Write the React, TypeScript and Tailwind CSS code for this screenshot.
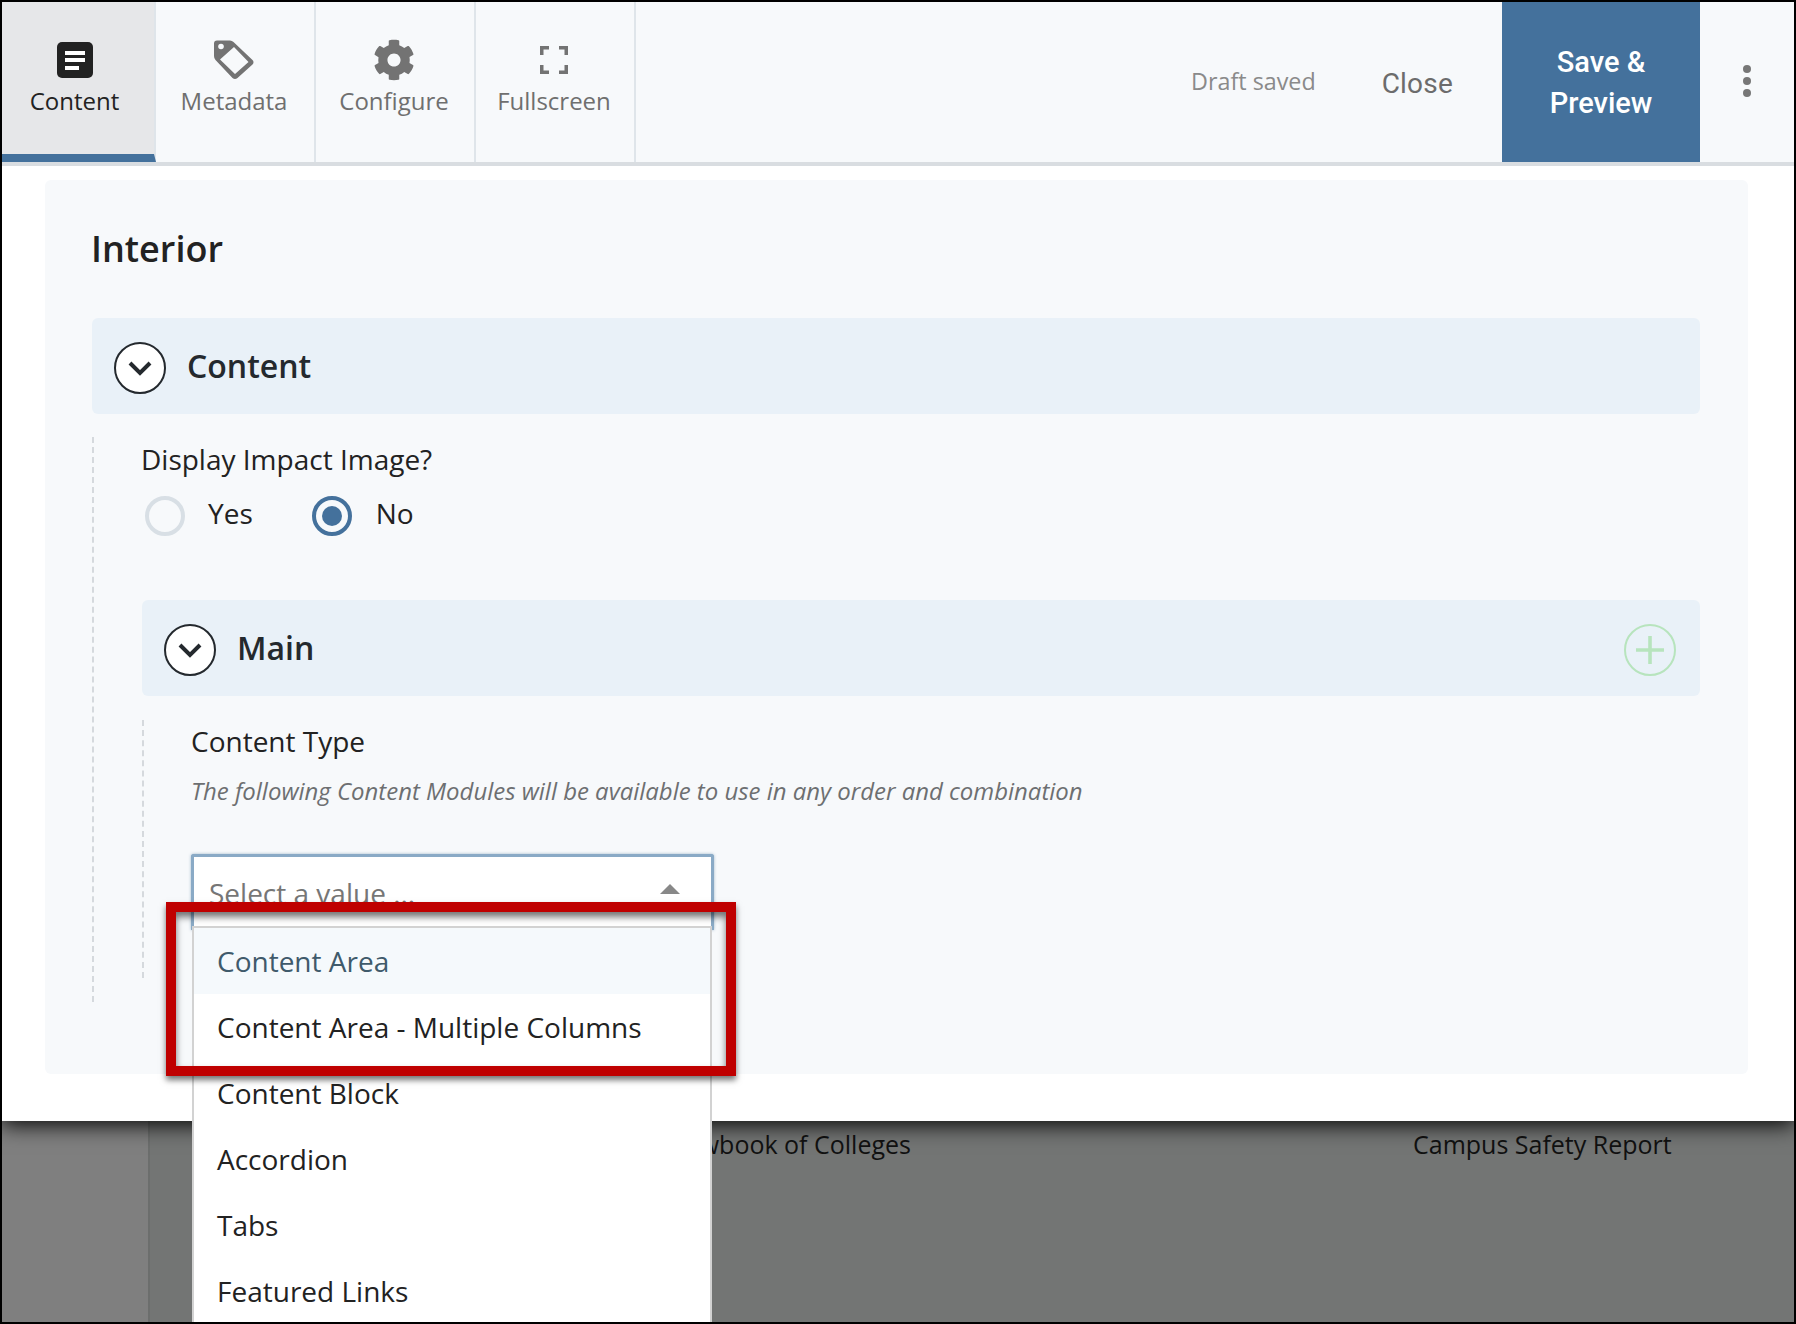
import React from "react";
import { FaCog } from "react-icons/fa";

const sans = "font-['Open_Sans',sans-serif]";

function DocIcon() {
  return (
    <svg width="36" height="36" viewBox="0 0 36 36">
      <rect width="36" height="36" rx="5" fill="#222222" />
      <rect x="8" y="9" width="20" height="4" fill="#fff" />
      <rect x="8" y="16" width="20" height="4" fill="#fff" />
      <rect x="8" y="24" width="14" height="4" fill="#fff" />
    </svg>
  );
}

function TagIcon() {
  return (
    <svg width="40" height="40" viewBox="0 0 40 40">
      <path
        d="M3 0.5 H16 Q18 0.5 19.5 2 L38.5 20 Q40.5 22 38.5 24.5 L23.5 38 Q21 40 18.5 38 L1.5 20 Q0 18.5 0 16 V3.5 Q0 0.5 3 0.5 Z M20 7 L6 19.5 L21 34 L34.5 22 Z"
        fill="#737373"
        fillRule="evenodd"
      />
      <circle cx="7" cy="6.5" r="2.8" fill="#f7f9fb" />
    </svg>
  );
}

function FullIcon() {
  return (
    <svg width="28" height="28" viewBox="0 0 28 28" fill="#737373">
      <path d="M0 0 H9 V3.5 H3.5 V9 H0 Z" />
      <path d="M28 0 H19 V3.5 H24.5 V9 H28 Z" />
      <path d="M0 28 H9 V24.5 H3.5 V19 H0 Z" />
      <path d="M28 28 H19 V24.5 H24.5 V19 H28 Z" />
    </svg>
  );
}

function Tab({ label, active, icon }: { label: string; active?: boolean; icon: React.ReactNode }) {
  return (
    <div
      className={
        active
          ? "w-[154px] h-[160px] shrink-0 flex flex-col items-center pr-[7px] bg-[#e6e7e9] border-b-[8px] border-[#44719c] border-r-[2px] border-r-[#dfe5ea] text-[#222222]"
          : "w-[160px] h-[160px] shrink-0 flex flex-col items-center pr-[2px] border-r-[2px] border-[#dfe5ea] text-[#6f6f6f]"
      }
    >
      <div className="h-[40px] mt-[38px] flex items-center justify-center">{icon}</div>
      <div className="mt-[4px] text-[24px] leading-[34px]">{label}</div>
    </div>
  );
}

function Chevron() {
  return (
    <div className="w-[52px] h-[52px] mt-[4px] rounded-full bg-white border-[2px] border-[#24292e] flex items-center justify-center shrink-0">
      <svg width="24" height="15" viewBox="0 0 24 15" fill="none">
        <path d="M2 2 L12 12 L22 2" stroke="#24292e" strokeWidth="4" />
      </svg>
    </div>
  );
}

function Radio({ checked }: { checked?: boolean }) {
  return (
    <div
      className={
        checked
          ? "w-[40px] h-[40px] rounded-full border-[4px] border-[#44719c] flex items-center justify-center"
          : "w-[40px] h-[40px] rounded-full border-[4px] border-[#d8dfe5]"
      }
    >
      {checked ? <div className="w-[20px] h-[20px] rounded-full bg-[#44719c]" /> : null}
    </div>
  );
}

const options = ["Content Area", "Content Area - Multiple Columns", "Content Block", "Accordion", "Tabs", "Featured Links"];

export default function App() {
  return (
    <div className={`relative w-[1796px] h-[1324px] overflow-hidden border-[2px] border-black flex flex-col bg-[#737574] ${sans}`}>
      {/* Modal */}
      <div className="relative z-10 h-[1119px] shrink-0 bg-white flex flex-col shadow-[0_4px_20px_rgba(0,0,0,0.95)]">
        <div className="h-[164px] shrink-0 bg-[#f7f9fb] border-b-[4px] border-[#d9dde1] flex">
          <Tab label="Content" active icon={<DocIcon />} />
          <Tab label="Metadata" icon={<TagIcon />} />
          <Tab label="Configure" icon={<FaCog className="w-[42px] h-[42px] text-[#737373]" />} />
          <Tab label="Fullscreen" icon={<FullIcon />} />
          <div className="flex-1 flex items-center justify-end text-[#8a8a8a]">
            <div className="text-[23.3px] leading-none">Draft saved</div>
            <div className="ml-[66px] mr-[49px] mt-[4px] text-[28px] leading-none text-[#6c6c6c] font-['Roboto',sans-serif] tracking-[0.2px]">Close</div>
          </div>
          <div className="w-[198px] h-[160px] shrink-0 bg-[#44719c] text-white text-[29px] leading-[41px] font-medium font-['Roboto',sans-serif] text-center flex items-center justify-center pt-[1px]">
            <span>Save &amp;<br />Preview</span>
          </div>
          <div className="w-[94px] shrink-0 h-[160px] flex flex-col items-center justify-center gap-[4px] pb-[2px]">
            <div className="w-[8px] h-[8px] rounded-full bg-[#777777]" />
            <div className="w-[8px] h-[8px] rounded-full bg-[#777777]" />
            <div className="w-[8px] h-[8px] rounded-full bg-[#777777]" />
          </div>
        </div>

        <div className="ml-[43px] mr-[46px] mt-[14px] h-[894px] bg-[#f7f9fb] rounded-[6px] pl-[47px] pr-[48px] pt-[44px] text-[#222222]">
          <h1 className="text-[36px] leading-[50px] font-semibold -ml-[1px] text-[#222222]">Interior</h1>
          <div className="mt-[44px] h-[96px] rounded-[6px] bg-[#e9f1f8] flex items-center px-[22px]">
            <Chevron />
            <div className="ml-[21px] text-[32px] font-semibold text-[#24292e]">Content</div>
          </div>
          <div className="mt-[23px] h-[565px] border-l-[2px] border-dashed border-[#d5d9dd] pl-[48px]">
            <div className="text-[28px] leading-[36px] pt-[4px] -ml-[1px] text-[#222222]">Display Impact Image?</div>
            <div className="mt-[19px] flex items-center pl-[3px]">
              <Radio />
              <div className="ml-[23px] text-[28px] leading-[36px] -mt-[6px]">Yes</div>
              <div className="ml-[59px]"><Radio checked /></div>
              <div className="ml-[24px] text-[28px] leading-[36px] -mt-[6px]">No</div>
            </div>
            <div className="mt-[64px] h-[96px] rounded-[6px] bg-[#e9f1f8] flex items-center pl-[22px] pr-[24px]">
              <Chevron />
              <div className="ml-[21px] text-[32px] font-semibold text-[#24292e]">Main</div>
              <div className="ml-auto mt-[4px] w-[52px] h-[52px] rounded-full border-[2px] border-[#b7e4bd] flex items-center justify-center">
                <svg width="28" height="28" viewBox="0 0 28 28"><path d="M14 0 V28 M0 14 H28" stroke="#b7e4bd" strokeWidth="3.6" /></svg>
              </div>
            </div>
            <div className="mt-[24px] h-[258px] border-l-[2px] border-dashed border-[#d5d9dd] pl-[47px]">
              <div className="text-[28px] leading-[36px] pt-[3px] text-[#222222]">Content Type</div>
              <div className="mt-[14px] text-[23.95px] leading-[36px] italic text-[#6d6f71]">The following Content Modules will be available to use in any order and combination</div>
              <div className="mt-[45px] w-[523px] h-[76px] border-[3px] border-b-0 border-[#8aaac6] rounded-t-[3px] bg-white shadow-[0_0_3px_rgba(68,113,156,0.5)] flex items-center pl-[15px] pr-[31px]">
                <span className="text-[28px] -mt-[2px] text-[#767676]">Select a value ...</span>
                <svg className="ml-auto -mt-[10px]" width="20" height="10" viewBox="0 0 20 10"><path d="M10 0 L20 10 H0 Z" fill="#888888" /></svg>
              </div>
            </div>
          </div>
        </div>
      </div>

      {/* Page behind the modal */}
      <div className="flex-1 flex bg-[#737574]">
        <div className="w-[148px] shrink-0 bg-[#7f7f7f] border-r-[2px] border-[#6c6e6d]" />
        <div className="flex-1 flex text-[25px] leading-[34px] text-[#111111] pt-[6px]">
          <div className="ml-[461px] w-[300px] whitespace-nowrap text-right">Viewbook of Colleges</div>
          <div className="ml-[502px] whitespace-nowrap">Campus Safety Report</div>
        </div>
      </div>

      {/* Open dropdown */}
      <div className="absolute z-20 left-[190px] top-[924px] w-[520px] h-[398px] bg-white border-l-[2px] border-r-[2px] border-t-[2px] border-[#d2d2d2] overflow-hidden">
        {options.map((o, i) => (
          <div
            key={o}
            className={
              i === 0
                ? "h-[66px] flex items-center pl-[23px] text-[28px] bg-[#f5f9fc] text-[#3f5a6b]"
                : "h-[66px] flex items-center pl-[23px] text-[28px] bg-white text-[#222222]"
            }
          >
            {o}
          </div>
        ))}
      </div>

      {/* Annotation box */}
      <div className="absolute z-30 left-[164px] top-[900px] w-[570px] h-[174px] border-[10px] border-[#bf0000] shadow-[0_4px_6px_rgba(0,0,0,0.55),inset_0_5px_7px_rgba(0,0,0,0.55)]" />
    </div>
  );
}
